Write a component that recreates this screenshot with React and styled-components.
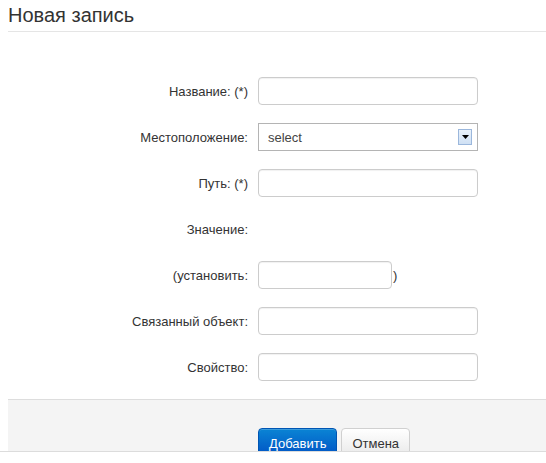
import styled, { createGlobalStyle } from "styled-components";

const GlobalStyle = createGlobalStyle`
  body {
    margin: 0;
    background: #fff;
    font-family: "Liberation Sans", Arial, sans-serif;
    color: #333;
  }
`;

const fields = [
  { label: "Название: (*)", kind: "input" },
  { label: "Местоположение:", kind: "select" },
  { label: "Путь: (*)", kind: "input" },
  { label: "Значение:", kind: "none" },
  { label: "(установить:", kind: "short" },
  { label: "Связанный объект:", kind: "input" },
  { label: "Свойство:", kind: "input" },
];

export default function App() {
  return (
    <>
      <GlobalStyle />
      <Frame>
        <Header>
          <Title>Новая запись</Title>
        </Header>

        <Form>
          {fields.map((f) => (
            <Row key={f.label}>
              <Label>{f.label}</Label>
              <Controls>
                {f.kind === "input" && <Input type="text" />}
                {f.kind === "short" && (
                  <>
                    <Input type="text" $short />
                    <Paren>)</Paren>
                  </>
                )}
                {f.kind === "select" && (
                  <Select>
                    <span>select</span>
                    <DropButton>
                      <svg width="7" height="4" viewBox="0 0 7 4">
                        <path d="M0 0h7L3.5 4z" fill="#000" />
                      </svg>
                    </DropButton>
                  </Select>
                )}
              </Controls>
            </Row>
          ))}
        </Form>

        <Footer>
          <Button $primary>Добавить</Button>
          <Button>Отмена</Button>
        </Footer>
      </Frame>
    </>
  );
}

const Frame = styled.div`
  height: 452px;
  box-sizing: border-box;
  overflow: hidden;
  border-bottom: 1px solid #dcdcdc;
`;

const Header = styled.div`
  margin-left: 8px;
  height: 31px;
  border-bottom: 1px solid #e5e5e5;
`;

const Title = styled.h3`
  margin: 0;
  font-size: 20px;
  font-weight: normal;
  line-height: 30px;
  color: #333;
`;

const Form = styled.div`
  display: flex;
  flex-direction: column;
  gap: 18px;
  padding: 45px 0 18px;
`;

const Row = styled.div`
  display: grid;
  grid-template-columns: 248px 1fr;
  column-gap: 10px;
  height: 28px;
  align-items: center;
`;

const Label = styled.label`
  text-align: right;
  font-size: 13px;
  color: #333;
`;

const Controls = styled.div`
  display: flex;
  align-items: center;
`;

const Input = styled.input`
  box-sizing: border-box;
  width: ${(p) => (p.$short ? "134px" : "220px")};
  height: 28px;
  margin: 0;
  padding: 4px 6px;
  border: 1px solid #ccc;
  border-radius: 4px;
  background: #fff;
  box-shadow: inset 0 1px 1px rgba(0, 0, 0, 0.06);
  font: 13px "Liberation Sans", Arial, sans-serif;
  outline: none;
`;

const Paren = styled.span`
  font-size: 13px;
  margin-left: 1px;
  color: #333;
`;

const Select = styled.div`
  box-sizing: border-box;
  width: 220px;
  height: 28px;
  border: 1px solid #b4b4b4;
  display: flex;
  align-items: center;
  justify-content: space-between;
  padding: 0 5px 0 9px;
  font-size: 13px;
  color: #444;
`;

const DropButton = styled.span`
  box-sizing: border-box;
  width: 14px;
  height: 16px;
  border: 1px solid #9bb7dc;
  background: linear-gradient(#eaf2fb, #cfe0f4);
  display: flex;
  align-items: center;
  justify-content: center;
`;

const Footer = styled.div`
  margin-left: 8px;
  border-top: 1px solid #ddd;
  background: #f4f4f4;
  padding: 28px 0 20px 250px;
  display: flex;
  gap: 4px;
`;

const Button = styled.button`
  box-sizing: border-box;
  height: 30px;
  padding: 0 10px;
  border-radius: 4px;
  font: 13px "Liberation Sans", Arial, sans-serif;
  border: 1px solid ${(p) => (p.$primary ? "#0055b3" : "#d0d0d0")};
  color: ${(p) => (p.$primary ? "#fff" : "#333")};
  background: ${(p) =>
    p.$primary
      ? "linear-gradient(#0a84d4, #0051c4)"
      : "linear-gradient(#ffffff, #e8e8e8)"};
  box-shadow: inset 0 1px 0 rgba(255, 255, 255, 0.2);
  cursor: pointer;
`;
